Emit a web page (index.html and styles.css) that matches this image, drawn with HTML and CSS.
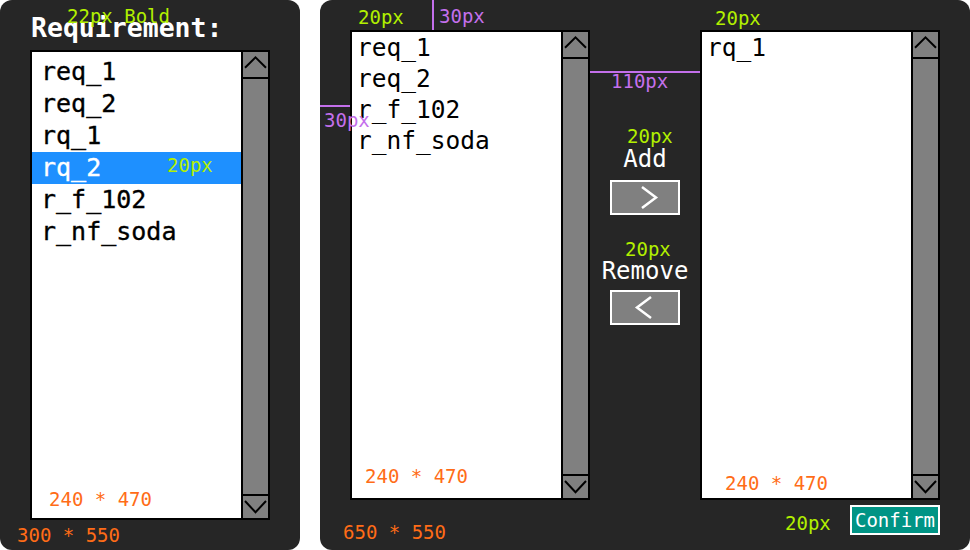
FILE: index.html
```html
<!DOCTYPE html>
<html>
<head>
<meta charset="utf-8">
<link rel="stylesheet" href="styles.css">
</head>
<body>
<div class="page">
  <section class="panel panel-left">
    <h1 class="heading">Requirement:</h1>
    <div class="listbox">
      <ul class="items items-main">
        <li>req_1</li>
        <li>req_2</li>
        <li>rq_1</li>
        <li class="selected">rq_2</li>
        <li>r_f_102</li>
        <li>r_nf_soda</li>
      </ul>
      <div class="scrollbar">
        <div class="sb-btn sb-up"><svg width="25" height="25" viewBox="0 0 25 25"><polyline points="2,15.7 12.5,5.3 23,15.7" fill="none" stroke="#000" stroke-width="2"/></svg></div>
        <div class="sb-track"></div>
        <div class="sb-btn sb-down"><svg width="25" height="22" viewBox="0 0 25 22"><polyline points="2,5 12.5,16.3 23,5" fill="none" stroke="#000" stroke-width="2"/></svg></div>
      </div>
    </div>
    <span class="note green" style="left:67px;top:7px">22px Bold</span>
    <span class="note green" style="left:167px;top:156px">20px</span>
    <span class="note orange" style="left:49px;top:490px">240 * 470</span>
    <span class="note orange" style="left:17px;top:526px">300 * 550</span>
  </section>

  <section class="panel panel-right">
    <div class="transfer">
      <div class="listbox">
        <ul class="items items-side">
          <li>req_1</li>
          <li>req_2</li>
          <li>r_f_102</li>
          <li>r_nf_soda</li>
        </ul>
        <div class="scrollbar">
          <div class="sb-btn sb-up"><svg width="25" height="25" viewBox="0 0 25 25"><polyline points="2,15.7 12.5,5.3 23,15.7" fill="none" stroke="#000" stroke-width="2"/></svg></div>
          <div class="sb-track"></div>
          <div class="sb-btn sb-down"><svg width="25" height="22" viewBox="0 0 25 22"><polyline points="2,5 12.5,16.3 23,5" fill="none" stroke="#000" stroke-width="2"/></svg></div>
        </div>
      </div>
      <div class="mid">
        <div class="mid-label">Add</div>
        <button class="move-btn"><svg width="66" height="31" viewBox="0 0 66 31"><polyline points="30,5 44,15.5 30,26" fill="none" stroke="#fff" stroke-width="2.5"/></svg></button>
        <div class="mid-label mid-label-second">Remove</div>
        <button class="move-btn move-btn-second"><svg width="66" height="31" viewBox="0 0 66 31"><polyline points="39,5 25,15.5 39,26" fill="none" stroke="#fff" stroke-width="2.5"/></svg></button>
      </div>
      <div class="listbox">
        <ul class="items items-side">
          <li>rq_1</li>
        </ul>
        <div class="scrollbar">
          <div class="sb-btn sb-up"><svg width="25" height="25" viewBox="0 0 25 25"><polyline points="2,15.7 12.5,5.3 23,15.7" fill="none" stroke="#000" stroke-width="2"/></svg></div>
          <div class="sb-track"></div>
          <div class="sb-btn sb-down"><svg width="25" height="22" viewBox="0 0 25 22"><polyline points="2,5 12.5,16.3 23,5" fill="none" stroke="#000" stroke-width="2"/></svg></div>
        </div>
      </div>
    </div>
    <div class="actions">
      <button class="confirm">Confirm</button>
    </div>

    <span class="line vline"></span>
    <span class="line hline-left"></span>
    <span class="line hline-mid"></span>
    <span class="note green" style="left:38px;top:8px">20px</span>
    <span class="note purple" style="left:119px;top:7px">30px</span>
    <span class="note purple" style="left:4px;top:111px">30px</span>
    <span class="note purple" style="left:291px;top:72px">110px</span>
    <span class="note green" style="left:307px;top:127px">20px</span>
    <span class="note green" style="left:305px;top:240px">20px</span>
    <span class="note green" style="left:395px;top:9px">20px</span>
    <span class="note orange" style="left:45px;top:467px">240 * 470</span>
    <span class="note orange" style="left:405px;top:474px">240 * 470</span>
    <span class="note orange" style="left:23px;top:523px">650 * 550</span>
    <span class="note green" style="left:465px;top:514px">20px</span>
  </section>
</div>
</body>
</html>
```

FILE: styles.css
```css
html, body {
  margin: 0;
  padding: 0;
  background: #ffffff;
}

body {
  font-family: "DejaVu Sans Mono", "Liberation Mono", monospace;
}

.page {
  display: flex;
  gap: 20px;
  width: 970px;
  height: 550px;
}

.panel {
  position: relative;
  height: 550px;
  box-sizing: border-box;
  background: #262626;
  border-radius: 12px;
}

.panel-left {
  width: 300px;
  padding: 0 30px;
}

.panel-right {
  width: 650px;
  padding: 30px 30px 0 30px;
}

.heading {
  margin: 0;
  height: 50px;
  box-sizing: border-box;
  padding-top: 13px;
  padding-left: 1px;
  font-size: 26.5px;
  line-height: 30px;
  font-weight: bold;
  color: #ffffff;
}

.listbox {
  display: flex;
  width: 240px;
  height: 470px;
  box-sizing: border-box;
  border: 2px solid #000000;
  background: #ffffff;
}

.items {
  flex: 1;
  list-style: none;
  margin: 0;
  padding: 0;
  color: #000000;
}

.items-main {
  padding-top: 4px;
  font-size: 25px;
  line-height: 32px;
  -webkit-text-stroke: 0.35px currentColor;
}

.items-main li {
  padding-left: 9px;
}

.items-side {
  font-size: 24.5px;
  line-height: 31px;
}

.items-side li {
  padding-left: 5px;
}

.selected {
  background: #1e90ff;
  color: #ffffff;
}

.scrollbar {
  display: flex;
  flex-direction: column;
  width: 27px;
  box-sizing: border-box;
  border-left: 2px solid #000000;
  background: #808080;
}

.sb-btn svg {
  display: block;
}

.sb-up {
  height: 27px;
  box-sizing: border-box;
  border-bottom: 2px solid #000000;
}

.sb-track {
  flex: 1;
}

.sb-down {
  height: 24px;
  box-sizing: border-box;
  border-top: 2px solid #000000;
}

.transfer {
  display: flex;
  height: 470px;
}

.mid {
  width: 110px;
  display: flex;
  flex-direction: column;
  align-items: center;
  padding-top: 115px;
  box-sizing: border-box;
}

.mid-label {
  font-size: 24px;
  line-height: 28px;
  color: #ffffff;
}

.mid-label-second {
  margin-top: 42px;
}

.move-btn {
  display: block;
  width: 70px;
  height: 35px;
  margin-top: 7px;
  padding: 0;
  box-sizing: border-box;
  border: 2px solid #ffffff;
  background: #808080;
}

.move-btn svg {
  display: block;
}

.move-btn-second {
  margin-top: 5px;
}

.actions {
  display: flex;
  justify-content: flex-end;
  margin-top: 5px;
}

.confirm {
  width: 90px;
  height: 30px;
  padding: 0;
  box-sizing: border-box;
  border: 2px solid #ffffff;
  background: #009485;
  color: #ffffff;
  font-family: "DejaVu Sans Mono", "Liberation Mono", monospace;
  font-size: 19px;
  line-height: 26px;
}

.note {
  position: absolute;
  font-size: 19px;
  line-height: 19px;
  white-space: nowrap;
}

.green {
  color: #b2f000;
}

.orange {
  color: #ff6c17;
}

.purple {
  color: #c470ec;
}

.line {
  position: absolute;
  background: #c470ec;
}

.vline {
  left: 112px;
  top: 0;
  width: 2px;
  height: 30px;
}

.hline-left {
  left: 0;
  top: 105px;
  width: 30px;
  height: 2px;
}

.hline-mid {
  left: 270px;
  top: 71px;
  width: 110px;
  height: 2px;
}
```
